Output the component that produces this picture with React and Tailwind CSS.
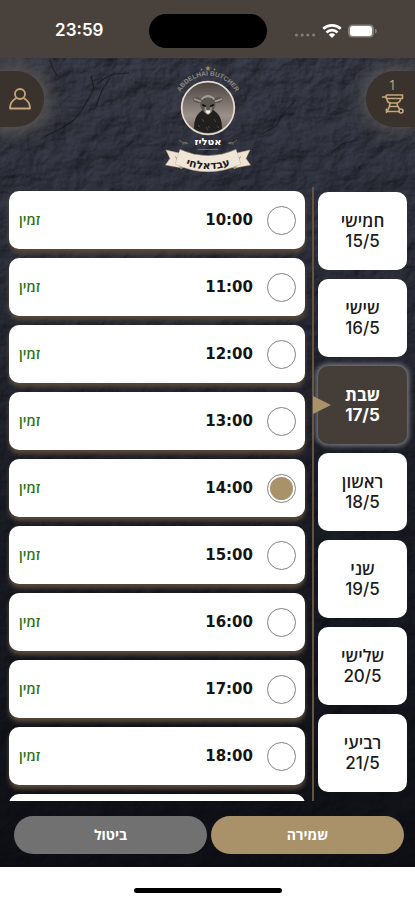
import { useState } from 'react';

const DAYS = [
  { name: 'חמישי', date: '15/5' },
  { name: 'שישי', date: '16/5' },
  { name: 'שבת', date: '17/5' },
  { name: 'ראשון', date: '18/5' },
  { name: 'שני', date: '19/5' },
  { name: 'שלישי', date: '20/5' },
  { name: 'רביעי', date: '21/5' },
];

const SLOTS = ['10:00', '11:00', '12:00', '13:00', '14:00', '15:00', '16:00', '17:00', '18:00'];

function StatusBar() {
  return (
    <div className="grid h-[58px] shrink-0 grid-cols-[1fr_118px_1fr] items-center bg-[#49423c] pt-1" dir="ltr">
      <div className="pl-2.5 text-center font-['Inter','Liberation_Sans',sans-serif] text-[17px] font-semibold text-white">23:59</div>
      <div className="h-[34px] rounded-full bg-black" />
      <div className="flex items-center justify-end pr-[38px]">
        <svg className="h-4 w-[84px]" viewBox="0 0 84 16" aria-hidden="true">
          <g fill="#857f79">
            <circle cx="3.5" cy="12" r="1.5" />
            <circle cx="9.2" cy="12" r="1.5" />
            <circle cx="14.9" cy="12" r="1.5" />
            <circle cx="20.6" cy="12" r="1.5" />
          </g>
          <g fill="none" stroke="#fff" strokeWidth="2.7">
            <path d="M30.3 5.8a13 13 0 0 1 17.4 0" />
            <path d="M33.5 9.4a8 8 0 0 1 11 0" />
          </g>
          <path d="M39 15l-3.2-3.3a4.7 4.7 0 0 1 6.4 0z" fill="#fff" />
          <rect x="55" y="1.5" width="26" height="13" rx="4.5" fill="#857f79" />
          <rect x="57" y="3" width="22" height="10" rx="3" fill="#fff" />
          <path d="M82 5.500c2.400.8 2.400 4.200 0 5z" fill="#857f79" />
        </svg>
      </div>
    </div>
  );
}

function SlateTexture() {
  return (
    <svg className="pointer-events-none absolute inset-0 h-full w-full" aria-hidden="true">
      <defs>
        <filter id="slate" x="0" y="0" width="100%" height="100%" colorInterpolationFilters="sRGB">
          <feTurbulence type="fractalNoise" baseFrequency="0.035 0.04" numOctaves="6" seed="8" />
          <feColorMatrix values="0 0 0 0 0  0 0 0 0 0  0 0 0 0 0  1 0 0 0 0" result="n" />
          <feDiffuseLighting in="n" surfaceScale="4" diffuseConstant="1" lightingColor="#525868">
            <feDistantLight azimuth="225" elevation="48" />
          </feDiffuseLighting>
        </filter>
        <linearGradient id="shade" x1="0" y1="0" x2="0" y2="1">
          <stop offset="0" stopColor="#20212a" stopOpacity="0.4" />
          <stop offset="0.18" stopColor="#1c1e28" stopOpacity="0.5" />
          <stop offset="0.5" stopColor="#101118" stopOpacity="0.75" />
          <stop offset="1" stopColor="#08090e" stopOpacity="0.9" />
        </linearGradient>
      </defs>
      <rect width="100%" height="100%" filter="url(#slate)" />
      <rect width="100%" height="100%" fill="url(#shade)" />
      <g fill="none" stroke="#15161d" strokeLinejoin="round" opacity="0.7">
        <path d="M50 2l3 9 5 8 M91 18l3 12-5 10-7 12-8 10-12 8-18 9 M97 26l8-6 10-4 14-1 M110 20l-8 12-6 16" strokeWidth="1.200" />
        <path d="M296 42l-12 12-8 14-14 8 M330 96l12-10 14-4" strokeWidth="1" />
      </g>
    </svg>
  );
}

function Logo() {
  return (
    <svg className="h-[120px] w-[130px]" viewBox="2 0 130 120" role="img" aria-label="אטליז עבדאלחי">
      <defs>
        <path id="topArc" d="M37 37.500A31.500 31.500 0 0 1 97 37.500" />
        <path id="bannerArc" d="M40 103.500Q67 115 94 103.500" />
        <linearGradient id="portrait" x1="0" y1="0" x2="0" y2="1">
          <stop offset="0" stopColor="#49433f" />
          <stop offset="0.65" stopColor="#9b918a" />
          <stop offset="1" stopColor="#6f6761" />
        </linearGradient>
        <clipPath id="portraitClip">
          <circle cx="67" cy="48" r="25" />
        </clipPath>
      </defs>
      <path d="M67 5.500l.8 1.800 1.900.2-1.400 1.300.4 1.900-1.700-1-1.700 1 .4-1.900-1.400-1.300 1.900-.2z" fill="#a9854b" />
      <circle cx="60.5" cy="9.500" r="0.9" fill="#8d8272" />
      <circle cx="73.5" cy="9.500" r="0.9" fill="#8d8272" />
      <text fill="#8c8988" fontSize="6.5" fontWeight="700" textAnchor="middle" fontFamily="'Liberation Sans', sans-serif">
        <textPath href="#topArc" startOffset="50%">ABDELHAI BUTCHER</textPath>
      </text>
      <circle cx="67" cy="48" r="26" fill="url(#portrait)" />
      <g clipPath="url(#portraitClip)">
        <path d="M54 76c-2-10-1-18 4-23l6-5h6l6 5c5 5 6 13 4 23z" fill="#211f1e" />
        <path d="M57 65l2 2m2-8l2 3m4 4l2 2m4-9l2 3m1 4l2 2m-13-1l2 3m-6 3l2 2m9-2l2 2" stroke="#4d4845" strokeWidth="1" />
        <path d="M60 39c-3-3-8-2-8.500 0 1 3 4 4.500 7.500 4 0 4 2 7 4 9 1 2 6 2 7.500 0 2-2 4-5 4-9 4 .5 7-1 7.500-4-1-3-6-3-9 0-4-4-9-4-13 0z" fill="#5b5550" />
        <path d="M53 39l7 2.500M81 39l-7 2.500M60.500 39.500c3-4 10-4 13 0M62 37.500c3-2 7-2 10 0" stroke="#a39c95" strokeWidth="1.4" fill="none" />
        <path d="M63.500 44l2.500 6h2.500l2.500-6-.5 8-2.500 2.500h-2L63.500 52z" fill="#948d86" />
        <path d="M64.500 50.500h5l-1 2.500-1.500 1-1.500-1z" fill="#f4f0ec" />
        <path d="M62 45l2 1M72 45l-2 1" stroke="#0b0a0a" strokeWidth="1.8" strokeLinecap="round" />
      </g>
      <circle cx="67" cy="48" r="26.3" fill="none" stroke="#e5dbd0" strokeWidth="1.7" />
      <text x="67" y="85" textAnchor="middle" fill="#fff" fontSize="10" fontWeight="700" fontFamily="'DejaVu Sans', 'Liberation Sans', sans-serif">אטליז</text>
      <path d="M38 80q3 4 8 2.500M41 84l6-.5M96 80q-3 4-8 2.500M93 84l-6-.5M57 89.500h20" fill="none" stroke="#77715f" strokeWidth="0.9" />
      <g stroke="#c7b091" strokeWidth="0.5">
        <path d="M38 93l-13-3 4 8.500-4.500 6.500L41 108l2-4z" fill="#efe4d3" />
        <path d="M96 93l13-3-4 8.500 4.500 6.500L93 108l-2-4z" fill="#efe4d3" />
        <path d="M34 96l6 13 4-3zM100 96l-6 13-4-3z" fill="#9d7850" />
        <path d="M39 89.500Q67 102 95 89.500L100 104Q67 119.500 34 104z" fill="#f0e6d8" />
      </g>
      <text fill="#1c1c22" fontSize="11" fontWeight="700" textAnchor="middle" fontFamily="'DejaVu Sans', 'Liberation Sans', sans-serif">
        <textPath href="#bannerArc" startOffset="50%">עבדאלחי</textPath>
      </text>
    </svg>
  );
}

function Header() {
  return (
    <header className="relative flex h-[129px] shrink-0 items-start" dir="ltr">
      <div className="flex flex-1 justify-start pt-[13px]">
        <button type="button" aria-label="חשבון" className="flex h-14 w-11 items-center justify-end rounded-r-full bg-[#39322d] pr-3 shadow-[0_0_20px_5px_#625c58]">
          <svg className="h-6 w-6" viewBox="0 0 24 24" fill="none" stroke="#c5a878" strokeWidth="1.8" strokeLinejoin="round" aria-hidden="true">
            <circle cx="12" cy="7" r="5" />
            <path d="M8.500 11C4.500 13 2 16.500 2 21.500h20c0-5-2.500-8.500-6.500-10.500" />
          </svg>
        </button>
      </div>
      <div className="pt-0.5">
        <Logo />
      </div>
      <div className="flex flex-1 justify-end pt-[13px]">
        <button type="button" aria-label="סל קניות" className="flex h-14 w-[49px] flex-col items-center rounded-l-full bg-[#39322d] pt-1.5 pl-1 shadow-[0_0_20px_2px_#625c58]">
          <span className="font-['Open_Sans',sans-serif] text-sm leading-4 text-[#c5a878]">1</span>
          <svg className="h-[22px] w-6" viewBox="0 0 24 22" fill="none" stroke="#c5a878" strokeWidth="1.6" strokeLinejoin="round" strokeLinecap="round" aria-hidden="true">
            <path d="M1.500 4h4M5.500 2h16v3.500h-2c0 2.500-1.500 4-3.500 4.500H9C7 9.500 6 8 6 6L4.500 4z" />
            <path d="M6.500 5.500h12M9 10c0 3-1 5-3 9M16 10c0 3 1.500 4 2.500 6M9 13.500h7.500M6 18.500h12M5.500 16v3.500" />
            <circle cx="20" cy="18" r="2" />
          </svg>
        </button>
      </div>
    </header>
  );
}

function Slot({ time, checked, onSelect }) {
  return (
    <label className="flex h-[58px] shrink-0 cursor-pointer items-center rounded-[10px] bg-white pr-[9px] pl-2.5 shadow-[0_4px_4px_0_#57493a]">
      <input
        type="radio"
        name="slot"
        value={time}
        checked={checked}
        onChange={() => onSelect(time)}
        className="size-[29px] appearance-none rounded-full border border-[#85827f] bg-clip-content p-0.5 checked:bg-[#a9916a]"
      />
      <span className="pr-3.5 font-['DejaVu_Sans',sans-serif] text-[15px] font-bold text-[#151515]" dir="ltr">{time}</span>
      <span className="mr-auto font-['Open_Sans','Liberation_Sans',sans-serif] text-sm font-semibold text-[#2a7413]">זמין</span>
    </label>
  );
}

function Day({ day, selected, onSelect }) {
  const tone = selected
    ? 'bg-[#453d37] font-bold text-white shadow-[0_0_5px_2px_#7c7c82]'
    : 'bg-white font-medium text-[#1c1c1c]';
  return (
    <button
      type="button"
      aria-pressed={selected}
      onClick={() => onSelect(day.date)}
      className={`relative flex h-[78px] w-full shrink-0 flex-col items-center justify-center rounded-[10px] font-['Inter','Open_Sans','Liberation_Sans',sans-serif] text-[17px] leading-5 ${tone}`}
    >
      <span className={selected ? 'font-bold' : 'font-semibold'}>{day.name}</span>
      <span dir="ltr">{day.date}</span>
      {selected && (
        <svg className="absolute top-1/2 -left-[5px] h-[18px] w-[18px] -translate-y-1/2" viewBox="0 0 18 18" aria-hidden="true">
          <path d="M0 0l18 9-18 9z" fill="#a9916a" />
        </svg>
      )}
    </button>
  );
}

export default function App() {
  const [day, setDay] = useState('17/5');
  const [slot, setSlot] = useState('14:00');

  return (
    <div className="flex h-screen flex-col bg-white" dir="rtl" lang="he">
      <StatusBar />
      <div className="relative flex min-h-0 flex-1 flex-col overflow-hidden bg-[#14151d]">
        <SlateTexture />
        <Header />
        <main className="relative flex min-h-0 flex-1 overflow-hidden">
          <nav aria-label="ימים" className="flex w-[103px] shrink-0 flex-col gap-[9px] border-l-2 border-[#66533f] pt-[5px] pr-2 pl-1">
            {DAYS.map((d) => (
              <Day key={d.date} day={d} selected={d.date === day} onSelect={setDay} />
            ))}
          </nav>
          <div role="radiogroup" aria-label="שעות" className="flex min-w-0 flex-1 flex-col gap-[9px] overflow-y-auto pt-1 pr-[7px] pl-[9px] [scrollbar-width:none]">
            {SLOTS.map((t) => (
              <Slot key={t} time={t} checked={t === slot} onSelect={setSlot} />
            ))}
            <div className="h-[58px] shrink-0 rounded-[10px] bg-white" />
          </div>
        </main>
        <footer className="relative flex shrink-0 gap-1 pt-[15px] pr-[11px] pb-[13px] pl-3.5 font-['Open_Sans','Liberation_Sans',sans-serif] text-sm font-bold text-white">
          <button type="button" className="h-[38px] flex-1 rounded-full bg-[#a9916a]">שמירה</button>
          <button type="button" className="h-[38px] flex-1 rounded-full bg-[#717171]">ביטול</button>
        </footer>
      </div>
      <div className="flex h-[33px] shrink-0 items-end justify-center bg-white pb-[7px]">
        <div className="h-[5px] w-[148px] rounded-full bg-black" />
      </div>
    </div>
  );
}
